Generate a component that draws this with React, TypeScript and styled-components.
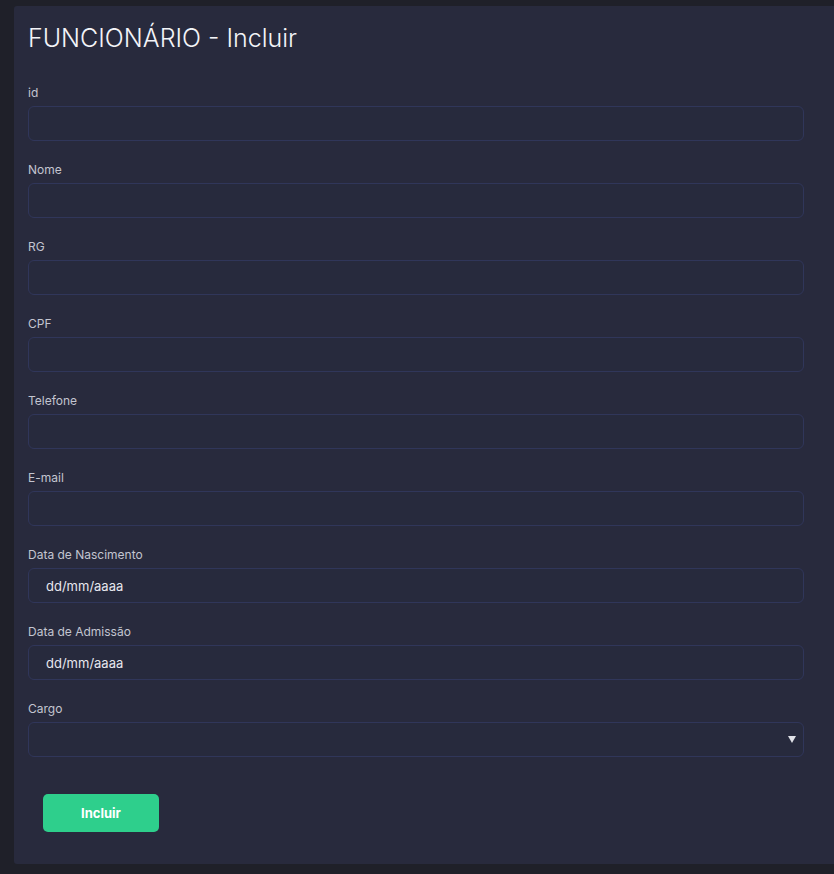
import React from "react";
import styled, { createGlobalStyle } from "styled-components";

const Global = createGlobalStyle`
  html, body { margin: 0; padding: 0; background: #1f2029; }
  body { font-family: "Inter", "Noto Sans", sans-serif; }
  * { box-sizing: border-box; }
`;

const Page = styled.div`
  min-height: 874px;
  padding: 6px 0 10px 14px;
  background: #1f2029;
`;

const Card = styled.section`
  background: #282a3d;
  border-radius: 3px 0 0 3px;
  padding: 15px 30px 32px 14px;
  display: flex;
  flex-direction: column;
`;

const Title = styled.h1`
  margin: 0 0 27px;
  font-size: 25px;
  line-height: 34px;
  font-weight: 300;
  color: #f3f4f8;
  letter-spacing: 0;
`;

const Field = styled.div`
  display: flex;
  flex-direction: column;
  gap: 3px;
  margin-bottom: 18px;
`;

const Label = styled.label`
  font-size: 12px;
  line-height: 21px;
  color: #c3c5d0;
  font-weight: 400;
`;

const Input = styled.input`
  height: 35px;
  width: 100%;
  background: #272a3d;
  border: 1px solid #30365a;
  border-radius: 6px;
  color: #e8e9ef;
  font-family: inherit;
  font-size: 13px;
  padding: 0 17px;
  outline: none;
  &::placeholder { color: #e6e7ee; opacity: 1; }
`;

const SelectWrap = styled.div`
  position: relative;
`;

const Select = styled.select`
  appearance: none;
  -webkit-appearance: none;
  height: 35px;
  width: 100%;
  background: #272a3d;
  border: 1px solid #30365a;
  border-radius: 6px;
  color: #e8e9ef;
  font-family: inherit;
  font-size: 13px;
  padding: 0 17px;
  outline: none;
`;

const Arrow = styled.svg`
  position: absolute;
  right: 8px;
  top: 14px;
  width: 8px;
  height: 7px;
  pointer-events: none;
`;

const Actions = styled.div`
  padding: 19px 0 0 15px;
`;

const Button = styled.button`
  width: 116px;
  height: 38px;
  border: none;
  border-radius: 5px;
  background: #2ecf8c;
  color: #ffffff;
  font-family: inherit;
  font-weight: 700;
  font-size: 13px;
  cursor: pointer;
`;

const fields = ["id", "Nome", "RG", "CPF", "Telefone", "E-mail"];

export default function App() {
  return (
    <Page>
      <Global />
      <Card>
        <Title>FUNCIONÁRIO - Incluir</Title>
        {fields.map((f) => (
          <Field key={f}>
            <Label>{f}</Label>
            <Input type="text" />
          </Field>
        ))}
        <Field>
          <Label>Data de Nascimento</Label>
          <Input type="text" placeholder="dd/mm/aaaa" />
        </Field>
        <Field>
          <Label>Data de Admissão</Label>
          <Input type="text" placeholder="dd/mm/aaaa" />
        </Field>
        <Field>
          <Label>Cargo</Label>
          <SelectWrap>
            <Select defaultValue="">
              <option value=""></option>
            </Select>
            <Arrow viewBox="0 0 8 7">
              <path d="M0 0 H8 L4 7 Z" fill="#e0e1e8" />
            </Arrow>
          </SelectWrap>
        </Field>
        <Actions>
          <Button>Incluir</Button>
        </Actions>
      </Card>
    </Page>
  );
}
